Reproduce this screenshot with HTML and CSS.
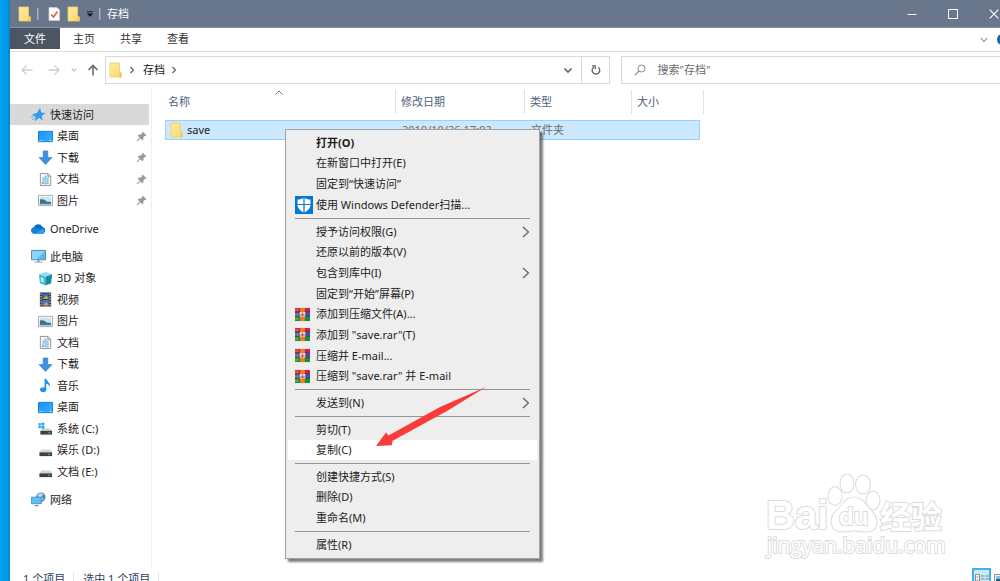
FILE: index.html
```html
<!DOCTYPE html>
<html lang="zh-CN">
<head>
<meta charset="utf-8">
<title>存档</title>
<link rel="stylesheet" href="styles.css">
</head>
<body>
<svg class="defs" aria-hidden="true">
  <defs>
    <linearGradient id="g-folder" x1="0" y1="0" x2="1" y2="1"><stop offset="0" stop-color="#ffeaa0"/><stop offset="1" stop-color="#fbd96f"/></linearGradient>
    <linearGradient id="g-blue" x1="0" y1="0" x2="1" y2="1"><stop offset="0" stop-color="#1790f5"/><stop offset="1" stop-color="#35b4ff"/></linearGradient>
  </defs>
  <symbol id="i-folder" viewBox="0 0 14 16"><path d="M1 1h9.500v9l2 1v4H1z" fill="url(#g-folder)" stroke="#f0cd62" stroke-width=".8"/><path d="M10.500 15.200V10.500l1.500.5v4.200z" fill="#f4c643"/></symbol>
  <symbol id="i-desktop" viewBox="0 0 16 16"><path d="M.5 2.500h15v11H.5z" fill="url(#g-blue)" stroke="#0f7fd8"/><path d="M1.500 12.300h2M5 12.300h1M12.500 12.300h2" stroke="#bfe6ff"/></symbol>
  <symbol id="i-down" viewBox="0 0 16 16"><path d="M5.500 1h5v7H15l-7 7.500L1 8h4.500z" fill="#3a93e0" stroke="#2b7fcb" stroke-width=".6"/></symbol>
  <symbol id="i-doc" viewBox="0 0 16 16"><path d="M2.500 1.500h8l3 3v10h-11z" fill="#fafafa" stroke="#8f8f8f"/><path d="M10.500 1.500v3h3" fill="none" stroke="#8f8f8f"/><path d="M4.500 6.500h7M4.500 8.500h7M7.500 10.500h4M7.500 12.500h4" stroke="#4ba3dd"/><path d="M7 4.500h2" stroke="#318dd0"/><path d="M4 10h3v3H4z" fill="#7fbde6"/></symbol>
  <symbol id="i-pic" viewBox="0 0 16 16"><path d="M.5 2.500h15v11H.5z" fill="#fff" stroke="#a5a5a5"/><path d="M2 4h12v8H2z" fill="#c3e3f7"/><path d="M2 7c3-1 5 0 7 2l5 .5V12H2z" fill="#416f74"/><path d="M2 10.500h12V12H2z" fill="#3f7fc0"/></symbol>
  <symbol id="i-pin" viewBox="0 0 12 12"><path d="M7.300 1 11 4.700l-1 .5-.5-.1-1.800 1.800.1 2-.9.9-2.100-2.100L1.500 11l-.5-.5 3.300-3.300L2.200 5.100l.9-.9 2 .1 1.800-1.800-.1-.5z" fill="#8d9aa3" stroke="#8d9aa3" stroke-width=".6"/></symbol>
  <symbol id="i-drive" viewBox="0 0 16 16"><path d="M3.500 7h9.500l2 3.500H1.500z" fill="#d4d4d4"/><path d="M1.500 10h13.500v4H1.500z" fill="#3d4144"/><path d="M11 12h2" stroke="#35e052" stroke-width="1.200"/></symbol>
  <symbol id="i-rar" viewBox="0 0 16 16"><path d="M0 1h16v4.500H0z" fill="#c82548"/><path d="M0 5.500h16V10H0z" fill="#3f4fb5"/><path d="M0 10h16v5H0z" fill="#17903c"/><path d="M0 5.300h16M0 10h16" stroke="#3b2340" stroke-width=".8"/><path d="M1 2v2.500M1 6.500v3M1 11v3M3 2v2.500M3 6.500v3M3 11v3" stroke="#e4b43c" stroke-width=".8"/><path d="M5.500 1h5v14h-5z" fill="#ef7b2c"/><path d="M5 5.500h6v5H5z" fill="#e9e2dc"/><path d="M6.500 10V7.500M8 10V6M9.500 10V7.500" stroke="#c24a27"/></symbol>
  <symbol id="i-chev" viewBox="0 0 8 12"><path d="M1 1l5.500 5L1 11" fill="none" stroke="#5c5f78" stroke-width="1.200"/></symbol>
  <symbol id="i-small-chev" viewBox="0 0 6 8"><path d="M1.500 1l3 3-3 3" fill="none" stroke="#666" stroke-width="1.300"/></symbol>
</svg>

<div class="window">
  <header class="titlebar">
    <svg class="folder"><use href="#i-folder"/></svg>
    <span class="bar"></span>
    <button class="quick check" aria-label="属性"><svg viewBox="0 0 12 14"><path d="M1 .5h8l2.500 2.500v10.500H1z" fill="#fff" stroke="#c9cdd2" stroke-width=".8"/><path d="M3 7.500l2.500 2.500L9.500 4.500" fill="none" stroke="#e0612e" stroke-width="1.600"/></svg></button>
    <button class="quick new" aria-label="新建文件夹"><svg class="folder"><use href="#i-folder"/></svg></button>
    <button class="quick more" aria-label="自定义快速访问工具栏"><svg viewBox="0 0 8 6"><path d="M1 .8h6" stroke="#222"/><path d="M.8 2.500h6.400L4 5.700z" fill="#111"/></svg></button>
    <span class="bar"></span>
    <h1>存档</h1>
    <div class="controls">
      <button aria-label="最小化"><svg viewBox="0 0 10 10"><path d="M.5 5.500h9" stroke="#fff"/></svg></button>
      <button aria-label="最大化"><svg viewBox="0 0 10 10"><path d="M.5.5h9v9h-9z" fill="none" stroke="#fff"/></svg></button>
      <button aria-label="关闭"><svg viewBox="0 0 10 10"><path d="M.7.7l8.600 8.600M9.300.7L.7 9.300" stroke="#fff" stroke-width="1.100"/></svg></button>
    </div>
  </header>

  <nav class="ribbon">
    <button class="tab file">文件</button>
    <button class="tab">主页</button>
    <button class="tab">共享</button>
    <button class="tab">查看</button>
    <div class="ribbon-end">
      <button class="expand" aria-label="展开功能区"><svg viewBox="0 0 8 6"><path d="M.8 1L4 4.500 7.200 1" fill="none" stroke="#a0a0a0" stroke-width="1.200"/></svg></button>
      <button class="help" aria-label="帮助"></button>
    </div>
  </nav>

  <div class="address-row">
    <button class="go" aria-label="后退"><svg viewBox="0 0 12 12"><path d="M11.500 6H1M5.500 1.500L1 6l4.500 4.500" fill="none" stroke="#cfcfcf" stroke-width="1.300"/></svg></button>
    <button class="go forward" aria-label="前进"><svg viewBox="0 0 12 12"><path d="M.5 6H11M6.500 1.500L11 6l-4.500 4.500" fill="none" stroke="#cfcfcf" stroke-width="1.300"/></svg></button>
    <button class="go recent" aria-label="最近位置"><svg viewBox="0 0 6 12"><path d="M.8 4.500L3 7l2.200-2.500" fill="none" stroke="#c4c4c4" stroke-width="1.200"/></svg></button>
    <button class="go up" aria-label="向上"><svg viewBox="0 0 12 12"><path d="M6 11.500V1.500M1.500 6L6 1.500 10.500 6" fill="none" stroke="#6b6b6b" stroke-width="1.600"/></svg></button>
    <div class="address">
      <svg class="folder"><use href="#i-folder"/></svg>
      <svg class="crumb-sep"><use href="#i-small-chev"/></svg>
      <button class="crumb">存档</button>
      <svg class="crumb-sep"><use href="#i-small-chev"/></svg>
      <button class="drop" aria-label="以前的位置"><svg viewBox="0 0 10 7"><path d="M1.500 1.500L5 5l3.500-3.500" fill="none" stroke="#666" stroke-width="1.700"/></svg></button>
      <button class="refresh" aria-label="刷新"><svg viewBox="0 0 12 12"><path d="M8.200 3.200A3.800 3.800 0 1 1 4 3" fill="none" stroke="#666" stroke-width="1.400"/><path d="M2 1.800h3.300v3.300" fill="none" stroke="#666" stroke-width="1.300"/></svg></button>
    </div>
    <label class="search">
      <svg viewBox="0 0 12 12"><circle cx="7.500" cy="4.500" r="3.500" fill="none" stroke="#8a8a8a"/><path d="M5 7L.8 11.200" stroke="#8a8a8a" stroke-width="1.100"/></svg>
      <input type="text" placeholder='搜索"存档"' aria-label="搜索">
    </label>
  </div>

  <div class="content">
    <nav class="tree">
      <div class="group">
        <a href="#" class="root active"><svg viewBox="0 0 14 14"><path d="M8.500 1l1 4.200 4 .5-3.500 2.600 1 4.500L7.500 10l-4 3.500 1-4.300L.8 7l4.700-1.500z" fill="#2f9bea"/><path d="M0 9.500l3-.8M1 12l3-1.800" stroke="#6bb8f0"/></svg>快速访问</a>
        <a href="#"><svg><use href="#i-desktop"/></svg>桌面<svg class="pin"><use href="#i-pin"/></svg></a>
        <a href="#"><svg><use href="#i-down"/></svg>下载<svg class="pin"><use href="#i-pin"/></svg></a>
        <a href="#"><svg><use href="#i-doc"/></svg>文档<svg class="pin"><use href="#i-pin"/></svg></a>
        <a href="#"><svg><use href="#i-pic"/></svg>图片<svg class="pin"><use href="#i-pin"/></svg></a>
      </div>
      <div class="group">
        <a href="#" class="root"><svg viewBox="0 0 16 16"><path d="M3.500 13.500a3.500 3.500 0 0 1-.5-6.900A5 5 0 0 1 12 6a4 4 0 0 1 1 7.500z" fill="#0f6cbd"/><path d="M3.500 13.500l9-5.500a3.500 3.500 0 0 1 .8 5.500z" fill="#2aa3ec"/><path d="M.2 10.500A3.500 3.500 0 0 1 5 7l5 2.600-7 3.900A3.300 3.300 0 0 1 .2 10.500z" fill="#1684d8"/></svg>OneDrive</a>
      </div>
      <div class="group">
        <a href="#" class="root"><svg viewBox="0 0 16 16"><path d="M.5 1.500h15v10H.5z" fill="#58b9f4" stroke="#4c87ad"/><path d="M1 2h14L6 11H1z" fill="#8ed5fb"/><path d="M7 12h2v1.500H7zM3.500 13.500h9v1h-9z" fill="#7b8f9c"/></svg>此电脑</a>
        <a href="#"><svg viewBox="0 0 16 16"><path d="M1 3.500L8 1l7 2.500L8 6z" fill="#8fe3ee"/><path d="M1 3.500L8 6v9.500L2 13z" fill="#3bb9cd"/><path d="M15 3.500L8 6v9.500l6-2.500z" fill="#128ba4"/><path d="M3 6.500l3 1v5l-3-1.200z" fill="#b8f0f6"/></svg>3D 对象</a>
        <a href="#"><svg viewBox="0 0 16 16"><path d="M2 .5h12v15H2z" fill="#3a3a3a"/><path d="M4.500 1.500h7v6h-7z" fill="#3565b5"/><path d="M4.500 8.500h7v6h-7z" fill="#4777c4"/><path d="M5 7.500l4-4 2.500 4zM5 14.500l4-4 2.500 4z" fill="#c8a14b"/><path d="M3.200 1.500v14M12.800 1.500v14" stroke="#e9e9e9" stroke-dasharray="1.500 1.300"/></svg>视频</a>
        <a href="#"><svg><use href="#i-pic"/></svg>图片</a>
        <a href="#"><svg><use href="#i-doc"/></svg>文档</a>
        <a href="#"><svg><use href="#i-down"/></svg>下载</a>
        <a href="#"><svg viewBox="0 0 16 16"><ellipse cx="5.500" cy="12.500" rx="3.300" ry="2.600" fill="#1c94e8"/><path d="M7 12.500V.8h1.800c.5 3 4.700 3.800 3.700 8.700-.6-2.200-2-3.200-3.700-3.500v6.500z" fill="#1c94e8"/></svg>音乐</a>
        <a href="#"><svg><use href="#i-desktop"/></svg>桌面</a>
        <a href="#"><svg viewBox="0 0 16 16"><path d="M4.500 8h8.500l2 3H2.500z" fill="#d4d4d4"/><path d="M2.500 10.500h12.500v4H2.500z" fill="#3d4144"/><path d="M11 12.500h2" stroke="#35e052" stroke-width="1.200"/><path d="M.5 2.500l2.500-.3v2.500H.5zM3.700 2l3-.4v3.100h-3zM.5 5.300H3v2.500l-2.500-.3zM3.700 5.300h3v3.100l-3-.4z" fill="#19a9ee"/></svg>系统 (C:)</a>
        <a href="#"><svg><use href="#i-drive"/></svg>娱乐 (D:)</a>
        <a href="#"><svg><use href="#i-drive"/></svg>文档 (E:)</a>
      </div>
      <div class="group">
        <a href="#" class="root"><svg viewBox="0 0 16 16"><circle cx="10.500" cy="5.500" r="5" fill="#568fb5"/><path d="M7 3c2-2 4-2 6-.5L11 5l2.500 3-3 .5L8 6z" fill="#b7dced"/><path d="M.5 5.500h10.500v7H.5z" fill="#62bdf2" stroke="#3484b5" stroke-width=".8"/><path d="M4 14.500h4" stroke="#7b8f9c" stroke-width="1.500"/></svg>网络</a>
      </div>
    </nav>

    <main class="files">
      <table>
        <thead>
          <tr><th>名称<svg class="sort" viewBox="0 0 8 5"><path d="M.5 4.500L4 1l3.500 3.500" fill="none" stroke="#777"/></svg></th><th>修改日期</th><th>类型</th><th>大小</th></tr>
        </thead>
        <tbody>
          <tr><td class="name"><svg class="folder"><use href="#i-folder"/></svg>save</td><td>2019/10/26 17:02</td><td>文件夹</td><td></td></tr>
        </tbody>
      </table>
    </main>
  </div>

  <footer class="status">
    <span>1 个项目</span>
    <span>选中 1 个项目</span>
    <div class="views">
      <button class="on" aria-label="详细信息"><svg viewBox="0 0 14 12"><path d="M.5 1.500h4v9h-4z" fill="#fff" stroke="#8c8c8c"/><path d="M6 3h3.500M10.500 3H14M6 6h3.500M10.500 6H14M6 9h3.500M10.500 9H14M1.500 4h2M1.500 7h2" stroke="#7c8790"/></svg></button>
      <button aria-label="大图标"><svg viewBox="0 0 14 12"><path d="M.5 1.500h13v10H.5z" fill="#fff" stroke="#8c8c8c"/><path d="M2 3h10v3H2z" fill="#86bfe8"/><path d="M2 6h10v4H2z" fill="#2d5d74"/></svg></button>
    </div>
  </footer>

  <svg class="watermark" viewBox="0 0 190 90" role="img" aria-label="Baidu 经验">
    <text class="wm-brand" x="4" y="55">Bai</text>
    <g class="wm-shape">
      <ellipse cx="73" cy="22" rx="6.500" ry="9"/>
      <ellipse cx="85" cy="9.500" rx="6.500" ry="9"/>
      <ellipse cx="101" cy="10.500" rx="7" ry="9"/>
      <ellipse cx="111" cy="26.500" rx="6.500" ry="9"/>
      <path d="M92 23.500c9 0 11 7 17 13 9 9 7 21-5 21-5 0-8-1-12-1s-7 1-12 1c-12 0-13-13-6-20 7-6 9-14 18-14z"/>
    </g>
    <text class="wm-du" x="77" y="51">du</text>
    <text class="wm-cn" x="118" y="54">经验</text>
    <text class="wm-url" x="5" y="79">jingyan.baidu.com</text>
  </svg>

  <div class="menu" role="menu">
    <div class="items">
      <button role="menuitem" class="default">打开(O)</button>
      <button role="menuitem">在新窗口中打开(E)</button>
      <button role="menuitem">固定到“快速访问”</button>
      <button role="menuitem"><svg class="shield" viewBox="0 0 18 18"><path d="M0 0h18v18H0z" fill="#0078d7"/><path d="M9 1.500c2 1.500 4 2 6.500 2v5c0 4-3 6.500-6.500 8-3.500-1.500-6.500-4-6.500-8v-5C5 3.500 7 3 9 1.500z" fill="#fff"/><path d="M9 1v16M2 8.500h14" stroke="#0078d7" stroke-width="1.200"/></svg>使用 Windows Defender扫描...</button>
    </div>
    <hr>
    <div class="items">
      <button role="menuitem">授予访问权限(G)<svg class="sub"><use href="#i-chev"/></svg></button>
      <button role="menuitem">还原以前的版本(V)</button>
      <button role="menuitem">包含到库中(I)<svg class="sub"><use href="#i-chev"/></svg></button>
      <button role="menuitem">固定到“开始”屏幕(P)</button>
      <button role="menuitem"><svg class="rar"><use href="#i-rar"/></svg>添加到压缩文件(A)...</button>
      <button role="menuitem"><svg class="rar"><use href="#i-rar"/></svg>添加到 "save.rar"(T)</button>
      <button role="menuitem"><svg class="rar"><use href="#i-rar"/></svg>压缩并 E-mail...</button>
      <button role="menuitem"><svg class="rar"><use href="#i-rar"/></svg>压缩到 "save.rar" 并 E-mail</button>
    </div>
    <hr>
    <div class="items">
      <button role="menuitem">发送到(N)<svg class="sub"><use href="#i-chev"/></svg></button>
    </div>
    <hr>
    <div class="items">
      <button role="menuitem">剪切(T)</button>
      <button role="menuitem" class="hover">复制(C)</button>
    </div>
    <hr>
    <div class="items">
      <button role="menuitem">创建快捷方式(S)</button>
      <button role="menuitem">删除(D)</button>
      <button role="menuitem">重命名(M)</button>
    </div>
    <hr>
    <div class="items">
      <button role="menuitem">属性(R)</button>
    </div>
  </div>

  <svg class="arrow" viewBox="0 0 112 62" aria-hidden="true"><path d="M1 59L11 45.500l2.500 3L65 20 111 0 72 24 17.700 53.700l-1 4.500z" fill="#f93c3a"/></svg>
</div>
</body>
</html>
```
FILE: styles.css
```css
* { box-sizing: border-box; }

body {
  margin: 0;
  height: 100vh;
  overflow: hidden;
  padding-left: 10px;
  background: linear-gradient(90deg, #00a2f0 0, #009be8 7px, #0a7fc0 10px);
  font: 11px/16px "Noto Sans", "Noto Sans CJK SC", sans-serif;
  color: #1c1c1c;
}

button, input {
  font: inherit;
  color: inherit;
  border: 0;
  padding: 0;
  margin: 0;
  background: none;
}

button { display: flex; align-items: center; justify-content: center; }
svg { flex: none; display: block; }
a { color: inherit; text-decoration: none; }
.defs { position: absolute; width: 0; height: 0; }
.folder { width: 14px; height: 16px; }

.window {
  position: relative;
  display: flex;
  flex-direction: column;
  height: 100vh;
  overflow: hidden;
  background: #fff;
}

/* Title bar */
.titlebar {
  display: flex;
  align-items: center;
  flex: none;
  height: 28px;
  padding-left: 8px;
  background: #68778b;
  border-bottom: 1px solid #8390a1;
  color: #fff;
}
.bar { width: 2px; height: 12px; background: #8793a2; border-left: 1px solid #a9b2bd; margin-left: 5px; }
.check { margin-left: 9px; }
.check svg { width: 12px; height: 14px; }
.new { margin-left: 7px; }
.more { margin-left: 5px; }
.more svg { width: 8px; height: 6px; }
h1 { margin: 0 0 0 6px; font-size: 11px; font-weight: 400; }
.controls { display: flex; margin-left: auto; margin-right: -14px; }
.controls button { width: 41px; height: 26px; }
.controls svg { width: 10px; height: 10px; }

/* Ribbon */
.ribbon {
  display: flex;
  gap: 1px;
  flex: none;
  height: 24px;
  border-bottom: 1px solid #dcdcdc;
}
.tab { padding: 0 12px; height: 21px; color: #333; }
.file { padding: 0 14px; background: #4b5563; color: #fff; }
.ribbon-end { display: flex; align-items: center; gap: 9px; margin-left: auto; margin-right: -8px; }
.expand svg { width: 8px; height: 6px; }
.help { width: 11px; height: 11px; border-radius: 50%; background: #1668ad; }

/* Address row */
.address-row {
  display: flex;
  align-items: center;
  flex: none;
  height: 36px;
  padding-left: 11px;
}
.go { width: 12px; height: 20px; margin-right: 15px; }
.go svg { width: 12px; height: 12px; }
.forward { margin-right: 11px; }
.recent { width: 6px; margin-right: 10px; }
.recent svg { width: 6px; }
.up { margin-right: 6px; }
.address {
  display: flex;
  align-items: center;
  flex: 4 1 0;
  height: 28px;
  border: 1px solid #d9d9d9;
}
.address .folder { margin-left: 3px; }
.crumb-sep { width: 6px; height: 8px; margin: 0 8px 0 6px; }
.drop { width: 26px; height: 26px; margin-left: auto; }
.drop svg { width: 10px; height: 7px; }
.refresh { width: 28px; height: 26px; border-left: 1px solid #d9d9d9; }
.refresh svg { width: 12px; height: 12px; }
.search {
  display: flex;
  align-items: center;
  gap: 11px;
  flex: 3 1 0;
  height: 28px;
  margin-left: 11px;
  border: 1px solid #d9d9d9;
  border-right: 0;
}
.search svg { width: 12px; height: 12px; margin-left: 12px; }
.search input { flex: 1; min-width: 0; }
.search input::placeholder { color: #6a6a6a; opacity: 1; }

/* Content */
.content { display: flex; flex: 1; min-height: 0; }
.tree {
  width: 142px;
  flex: none;
  padding: 16px 2px 0 0;
  border-right: 1px solid #f0f0f0;
}
.group { display: grid; grid-auto-rows: 21px 22px; padding-bottom: 7px; }
.tree a { display: flex; align-items: center; padding: 0 2px 0 28px; }
.tree a svg { width: 15px; height: 15px; margin-right: 4px; }
.tree a.root { padding-left: 21px; }
.tree a.active { background: #d9d9d9; }
.tree a .pin { width: 11px; height: 11px; margin: 0 0 0 auto; }

.files { flex: 1; padding: 2px 0 0 13px; }
table, thead, tbody { display: block; }
table { width: 539px; }
tr { display: grid; grid-template-columns: 231px 129px 107px 72px; }
th {
  position: relative;
  height: 24px;
  padding: 0 0 0 5px;
  border-right: 1px solid #e2e2e2;
  line-height: 24px;
  text-align: left;
  font-weight: 400;
  color: #4c607a;
}
th:first-child { padding-left: 3px; }
.sort { position: absolute; top: 0; left: 50%; width: 8px; height: 5px; margin-left: -5px; }
tbody tr {
  margin: 6px 4px 0 0;
  background: #cce8ff;
  border: 1px solid #99d1ff;
}
td { padding: 0 0 0 5px; height: 18px; line-height: 18px; color: #6d6d6d; }
td.name { display: flex; align-items: center; gap: 3px; padding-left: 4px; color: #1c1c1c; }

/* Status bar */
.status {
  display: flex;
  align-items: center;
  flex: none;
  height: 22px;
  margin-bottom: -9px;
  padding-left: 13px;
  color: #2c4161;
}
.status span { padding-right: 8px; margin-right: 9px; border-right: 1px solid #e4e4e4; line-height: 14px; }
.views { display: flex; margin-left: auto; margin-right: -10px; }
.views button { width: 19px; height: 22px; }
.views .on { background: #cbe8f6; border: 2px solid #3fb4e6; }
.views svg { width: 14px; height: 12px; }

/* Context menu */
.menu {
  position: absolute;
  left: 275px;
  top: 129px;
  width: 255px;
  padding: 2px 2px 3px;
  background: #eee;
  border: 1px solid #a0a0a0;
  box-shadow: 3px 3px 2px rgba(0, 0, 0, .5);
}
.items { display: grid; grid-auto-rows: 21px 20px 21px; }
.menu button { position: relative; justify-content: flex-start; padding-left: 28px; text-align: left; }
.menu .default { font-weight: 700; }
.menu .hover { background: #fff; }
.menu hr { height: 1px; margin: 3px 7px 2px; border: 0; background: #949494; }
.shield { position: absolute; left: 7px; width: 18px; height: 18px; }
.rar { position: absolute; left: 7px; width: 15px; height: 15px; }
.sub { width: 8px; height: 12px; margin-left: auto; margin-right: 7px; }

.arrow { position: absolute; left: 365px; top: 387px; width: 112px; height: 62px; }

/* Watermark */
.watermark { position: absolute; right: 48px; bottom: 17px; width: 190px; height: 90px; }
.watermark text, .wm-shape { fill: #fff; stroke: #dcdcdc; stroke-width: 2px; paint-order: stroke; }
.wm-brand { font: 700 40px "Liberation Sans", sans-serif; }
.wm-du { font: 700 24px "Liberation Sans", sans-serif; }
.wm-cn { font: 700 31px "Noto Sans CJK SC", sans-serif; }
.wm-url { font: 400 21px "Open Sans", sans-serif; }
```
